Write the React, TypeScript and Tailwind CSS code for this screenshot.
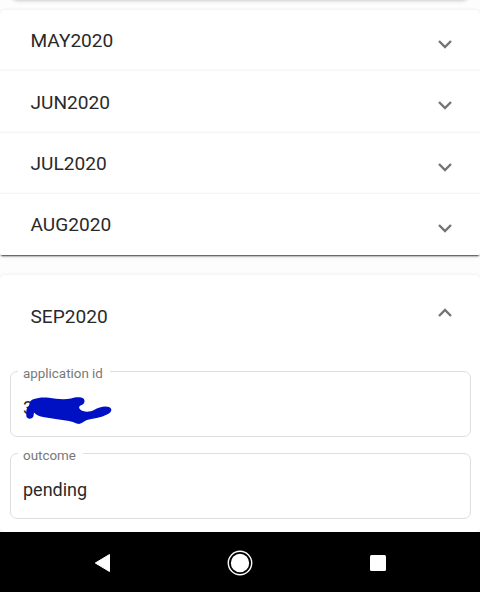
import React from 'react';

function Chevron({ up = false }: { up?: boolean }) {
  return (
    <svg width="14" height="9" viewBox="0 0 14 9" fill="none" stroke="#747474" strokeWidth="2.4">
      <path d={up ? 'M1 8 L7 2 L13 8' : 'M1 1 L7 7 L13 1'} />
    </svg>
  );
}

function MonthRow({ name, nudge = 'pt-[0.8px]' }: { name: string; nudge?: string }) {
  return (
    <div className="flex h-[61.33px] items-center justify-between bg-white pl-[30.5px] pr-7 shadow-[0_0_3px_rgba(0,0,0,0.11)]">
      <span className={`${nudge} text-[19.1px] leading-6`}>{name}</span>
      <span className="mt-[7.6px]"><Chevron /></span>
    </div>
  );
}

function Field({ label, children }: { label: string; children: React.ReactNode }) {
  return (
    <div className="relative h-[66px] rounded-[7px] border border-[#dedede] pl-3 pt-6">
      <span className="absolute -top-[7px] left-[7px] bg-white pl-[5px] pr-[7px] text-[13.4px] leading-[18px] text-[#787878]">
        {label}
      </span>
      {children}
    </div>
  );
}

export default function App() {
  return (
    <div className="flex h-[592px] w-[480px] flex-col overflow-hidden bg-[#fdfdfd] font-['Roboto',sans-serif] text-[#292929]">
      <div className="h-2.5 shrink-0 overflow-hidden">
        <div className="-mt-5 ml-3 mr-3 h-5 rounded-[5px] bg-white shadow-[0_0_4px_rgba(0,0,0,0.3)]" />
      </div>
      <div className="h-[245px] shrink-0 rounded-t-[5px] rounded-b-[2px] shadow-[0_2px_2px_-1px_rgba(0,0,0,0.75),0_1px_5px_rgba(0,0,0,0.1)]">
        <div className="h-[245px] overflow-hidden rounded-t-[5px] rounded-b-[2px]">
          <MonthRow name="MAY2020" />
          <MonthRow name="JUN2020" nudge="pt-[2px]" />
          <MonthRow name="JUL2020" />
          <MonthRow name="AUG2020" />
        </div>
      </div>
      <section className="mt-[20px] h-[257px] shrink-0 rounded-[5px] bg-white shadow-[0_0_4px_rgba(0,0,0,0.08)]">
        <div className="flex h-[83px] items-center justify-between pl-[30.5px] pr-7">
          <span className="text-[19.1px] leading-6">SEP2020</span>
          <span className="-mt-2"><Chevron up /></span>
        </div>
        <div className="flex flex-col gap-4 pl-2.5 pr-[9px] pt-[13px]">
          <Field label="application id">
            <div className="relative h-6 text-[18px] leading-6">
              3
              <svg className="absolute left-0 top-0 overflow-visible" width="92" height="28" viewBox="23 396 92 28">
                <path
                  d="M34 399 C38 397.5 44 397 49 397.8 C56 399 64 400 71 398.5 C75 397 81 396.5 83.5 398.5 C85.5 401 84.5 404.5 80.5 405.5 C78 406.5 79 410 83 411 C87 412.5 91 411.5 94 410 C99 407 105 405.5 109 407 C112.5 408.5 112 412 108 414 C101 418 92 418.5 87 420 C84 421 82 423.5 79 424 C76 423.7 74 422 69 421 C60 419.5 51 418.5 43 417 C38.5 416 36 414.5 34 412.5 L33.5 416 C32.5 419.5 27 419.5 26.3 416 L26.3 411 C26.3 408 29 406.5 29.5 404 C30 401 31 400 34 399 Z"
                  fill="#0011c4"
                />
              </svg>
            </div>
          </Field>
          <Field label="outcome">
            <div className="text-[18px] leading-6">pending</div>
          </Field>
        </div>
      </section>
      <nav className="flex h-[60px] shrink-0 bg-black">
        <svg width="480" height="60" viewBox="0 532 480 60" fill="white">
          <path d="M95.3 563 L109.5 554.5 V571.5 Z" stroke="white" strokeLinejoin="round" />
          <circle cx="240" cy="563" r="11.7" fill="none" stroke="white" strokeWidth="1.4" />
          <circle cx="240" cy="563" r="9.2" />
          <rect x="370" y="555" width="16" height="16" rx="1.5" />
        </svg>
      </nav>
    </div>
  );
}
